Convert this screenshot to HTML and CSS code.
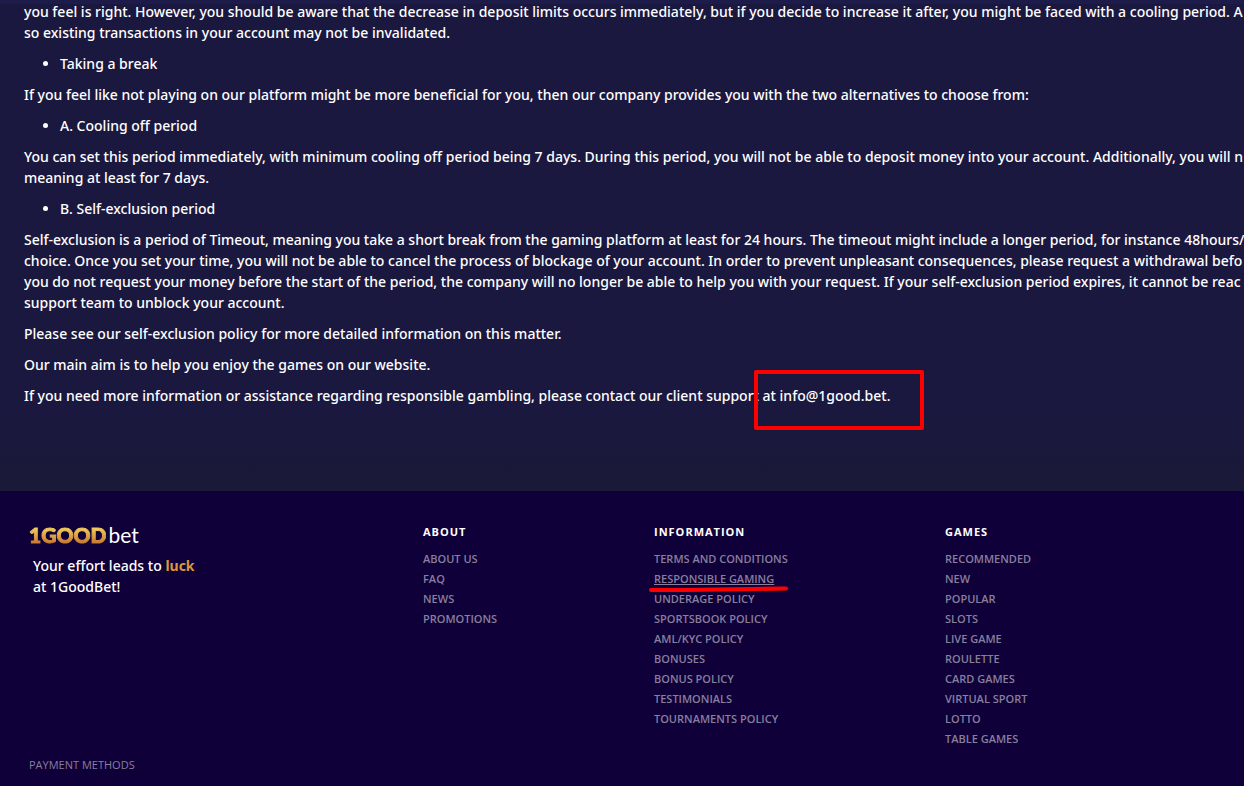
FILE: index.html
```html
<!DOCTYPE html>
<html lang="en">

<head>
	<meta charset="UTF-8">
	<meta name="viewport" content="width=device-width, initial-scale=1">
	<title>Responsible Gaming - 1GoodBet</title>
	<link rel="stylesheet" href="styles.css">
</head>

<body>
	<main class="content">
		<p>you feel is right. However, you should be aware that the decrease in deposit limits occurs immediately, but if you decide to increase it after, you might be faced with a cooling period. A<br>
			so existing transactions in your account may not be invalidated.</p>
		<ul>
			<li>Taking a break</li>
		</ul>
		<p>If you feel like not playing on our platform might be more beneficial for you, then our company provides you with the two alternatives to choose from:</p>
		<ul>
			<li>A. Cooling off period</li>
		</ul>
		<p>You can set this period immediately, with minimum cooling off period being 7 days. During this period, you will not be able to deposit money into your account. Additionally, you will n<br>
			meaning at least for 7 days.</p>
		<ul>
			<li>B. Self-exclusion period</li>
		</ul>
		<p>Self-exclusion is a period of Timeout, meaning you take a short break from the gaming platform at least for 24 hours. The timeout might include a longer period, for instance 48hours/<br>
			choice. Once you set your time, you will not be able to cancel the process of blockage of your account. In order to prevent unpleasant consequences, please request a withdrawal befo<br>
			you do not request your money before the start of the period, the company will no longer be able to help you with your request. If your self-exclusion period expires, it cannot be reac<br>
			support team to unblock your account.</p>
		<p>Please see our self-exclusion policy for more detailed information on this matter.</p>
		<p>Our main aim is to help you enjoy the games on our website.</p>
		<p>If you need more information or assistance regarding responsible gambling, please contact our client support <span class="contact">at info@1good.bet.</span></p>
	</main>

	<footer class="footer">
		<div class="footer-columns">
			<div class="brand">
				<a class="logo" href="#"><span class="logo-gold">1GOOD</span><span class="logo-bet">bet</span></a>
				<p class="slogan">Your effort leads to <strong>luck</strong><br>at 1GoodBet!</p>
			</div>
			<nav class="links" aria-labelledby="aboutTitle">
				<h2 id="aboutTitle">About</h2>
				<a href="#">About us</a>
				<a href="#">FAQ</a>
				<a href="#">News</a>
				<a href="#">Promotions</a>
			</nav>
			<nav class="links" aria-labelledby="infoTitle">
				<h2 id="infoTitle">Information</h2>
				<a href="#">Terms and conditions</a>
				<a class="active" href="#">Responsible gaming<svg class="marker" viewBox="0 0 140 8" aria-hidden="true"><path d="M2 5 L35 5 L68 4.500 L105 4 L137 3.500" /></svg></a>
				<a href="#">Underage policy</a>
				<a href="#">Sportsbook policy</a>
				<a href="#">AML/KYC policy</a>
				<a href="#">Bonuses</a>
				<a href="#">Bonus policy</a>
				<a href="#">Testimonials</a>
				<a href="#">Tournaments policy</a>
			</nav>
			<nav class="links" aria-labelledby="gamesTitle">
				<h2 id="gamesTitle">Games</h2>
				<a href="#">Recommended</a>
				<a href="#">New</a>
				<a href="#">Popular</a>
				<a href="#">Slots</a>
				<a href="#">Live game</a>
				<a href="#">Roulette</a>
				<a href="#">Card games</a>
				<a href="#">Virtual sport</a>
				<a href="#">Lotto</a>
				<a href="#">Table games</a>
			</nav>
		</div>
		<h3 class="payments">Payment methods</h3>
	</footer>
</body>

</html>
```

FILE: styles.css
```css
body {
	margin: 0;
	background-color: #10003a;
	color: #fff;
	font-family: "Noto Sans", "Open Sans", sans-serif;
	font-size: 14px;
	font-weight: 500;
	line-height: 21px;
	overflow: hidden;
}

.content {
	padding: 1px 0 75px 24px;
	background: linear-gradient(#1d1b4a 4px, #1b183f 4px, #1b183f 85%, #1a1937);
	white-space: nowrap;
}

.content p,
.content ul {
	margin: 0 0 10px;
}

.content ul {
	padding-left: 36px;
}

/* marked contact address */
.contact {
	position: relative;
}

.contact::after {
	content: "";
	position: absolute;
	top: -16px;
	left: -9px;
	right: -34px;
	bottom: -25px;
	border: 4px solid #f00;
	border-radius: 2px;
}

.footer {
	padding: 31px 0 10px 29px;
	background-color: #10003a;
	font-family: "Open Sans", sans-serif;
}

.footer-columns {
	display: grid;
	grid-template-columns: 394fr 231fr 291fr 299fr;
}

.logo {
	display: flex;
	align-items: baseline;
	gap: 2px;
	color: #fff;
	font-family: Lato, sans-serif;
	font-size: 21px;
	line-height: 25px;
	text-decoration: none;
}

.logo-gold {
	background: linear-gradient(#f5d45c 20%, #c9792f 85%);
	-webkit-background-clip: text;
	background-clip: text;
	color: transparent;
	font-weight: 900;
	-webkit-text-stroke: 1px transparent;
}

.logo-bet {
	font-weight: 400;
}

.slogan {
	margin: 8px 0 0 4px;
	font-family: "Noto Sans", "Open Sans", sans-serif;
}

.slogan strong {
	color: #dc973b;
}

.links {
	display: flex;
	flex-direction: column;
	align-items: flex-start;
	text-transform: uppercase;
}

.links h2 {
	margin: 0 0 7px;
	font-size: 11px;
	font-weight: 700;
	letter-spacing: 1px;
	line-height: 20px;
}

.links a {
	color: #877f9c;
	font-size: 11px;
	font-weight: 600;
	line-height: 20px;
	text-decoration: none;
}

.links .active {
	position: relative;
	text-decoration: underline;
}

.marker {
	position: absolute;
	left: -5px;
	bottom: -4px;
	width: 140px;
	height: 8px;
	fill: none;
	stroke: #f00;
	stroke-width: 4px;
	stroke-linecap: round;
}

.payments {
	margin: 6px 0 0;
	color: #877f9c;
	font-size: 11px;
	font-weight: 400;
	line-height: 20px;
	text-transform: uppercase;
}
```
